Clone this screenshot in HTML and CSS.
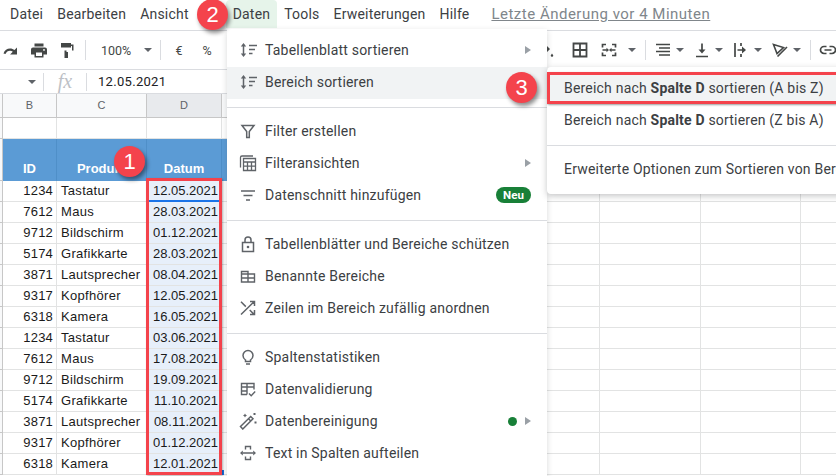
FILE: index.html
```html
<!DOCTYPE html>
<html lang="de">
<head>
<meta charset="utf-8">
<title>Daten-Menü</title>
<link rel="stylesheet" href="styles.css">
</head>
<body>
<div class="app">
  <header class="menubar">
    <span class="mi m-datei">Datei</span>
    <span class="mi">Bearbeiten</span>
    <span class="mi">Ansicht</span>
    <span class="mi mi-active">Daten</span>
    <span class="mi">Tools</span>
    <span class="mi">Erweiterungen</span>
    <span class="mi">Hilfe</span>
    <span class="lastedit">Letzte Änderung vor 4 Minuten</span>
  </header>

  <div class="toolbar">
    <span class="tb"><svg class="ic" viewBox="0 0 18 18"><path d="M1.500 12.500c1-3.200 3.600-5 6.600-5 1.700 0 3.200.6 4.400 1.600L15 6.600v6.900h-6.900l2.700-2.700c-.8-.7-1.700-1.100-2.800-1.100-1.900 0-3.800 1.200-4.500 3.300z" fill="#444746"/></svg></span>
    <span class="tb"><svg class="ic" viewBox="0 0 18 18"><path d="M4.500 2.500h9v3h-9zM3 6.500h12a2 2 0 0 1 2 2v5h-3.500v3h-9v-3H1v-5a2 2 0 0 1 2-2zm3 5v3.500h6v-3.500zm8-3.500a.9.900 0 1 0 0 1.800.9.900 0 0 0 0-1.800z" fill="#444746" fill-rule="evenodd"/></svg></span>
    <span class="tb"><svg class="ic" viewBox="0 0 18 18"><path d="M3 2h10v1.500h2.500v6H8.500V11H10v6H6.500v-7.500h7.500V5H13v1.500H3z" fill="#444746"/></svg></span>
    <span class="sep"></span>
    <span class="zoomval">100%</span>
    <span class="caret caret-zoom"></span>
    <span class="sep sep-b"></span>
    <span class="tbt">€</span>
    <span class="tbt">%</span>
    <span class="tb-space"></span>
    <span class="tb tb-fill"><svg class="ic" viewBox="0 0 18 18"><path d="M3 8l5-5 5 5-5 5zM15 12.500l1.300 2a1.300 1.300 0 1 1-2.600 0z" fill="#444746"/></svg></span>
    <span class="tb"><svg class="ic" viewBox="0 0 18 18"><path d="M2.500 2.500h13v13h-13zM9 2.500v13M2.500 9h13" fill="none" stroke="#444746" stroke-width="1.800"/></svg></span>
    <span class="tb tb-merge"><svg class="ic" viewBox="0 0 18 18"><path d="M6 3.500H2.500v3M2.500 11.500v3H6M12 3.500h3.500v3M15.500 11.500v3H12M2.500 9h4.500M15.500 9H11" fill="none" stroke="#444746" stroke-width="1.700"/><path d="M6.500 6.800L9 9l-2.500 2.200zM11.500 6.800L9 9l2.500 2.200z" fill="#444746"/></svg></span>
    <span class="tbc tbc-wide"><span class="caret"></span></span>
    <span class="sep sep-c"></span>
    <span class="tbg">
      <span class="tbi"><svg class="ic" viewBox="0 0 18 18"><path d="M2 3.500h14M5 7h11M2 10.500h14M5 14h11" fill="none" stroke="#444746" stroke-width="1.600"/></svg></span>
      <span class="tbc"><span class="caret"></span></span>
    </span>
    <span class="tbg">
      <span class="tbi"><svg class="ic" viewBox="0 0 18 18"><path d="M9 2.500v8M3 15.500h12" fill="none" stroke="#444746" stroke-width="1.700"/><path d="M5.500 8.500h7L9 12.500z" fill="#444746"/></svg></span>
      <span class="tbc"><span class="caret"></span></span>
    </span>
    <span class="tbg">
      <span class="tbi"><svg class="ic" viewBox="0 0 18 18"><path d="M3 2v14M9 2v3M9 13v3M5.500 9h6" fill="none" stroke="#444746" stroke-width="1.700"/><path d="M10 5.500L14 9l-4 3.500z" fill="#444746"/></svg></span>
      <span class="tbc"><span class="caret"></span></span>
    </span>
    <span class="tbg">
      <span class="tbi"><svg class="ic" viewBox="0 0 18 18"><path d="M2.500 3.500l10 3-6.500 6zM6.500 15.500l9.500-9.500" fill="none" stroke="#444746" stroke-width="1.600"/></svg></span>
      <span class="tbc"><span class="caret"></span></span>
    </span>
    <span class="sep sep-d"></span>
    <span class="tbi tb-link"><svg class="ic" viewBox="0 0 18 18"><path d="M7.500 5.500h-2.500a3.500 3.500 0 0 0 0 7h2.500M10.500 5.500h2.500a3.500 3.500 0 0 1 0 7h-2.500M5.500 9h7" fill="none" stroke="#444746" stroke-width="1.700"/></svg></span>
  </div>

  <div class="formulabar">
    <span class="caret caret-name"></span>
    <span class="fsep"></span>
    <span class="fx">fx</span>
    <span class="fsep"></span>
    <span class="fval">12.05.2021</span>
  </div>

  <div class="sheet">
    <div class="row colhead">
      <div class="c c0"></div><div class="c">B</div><div class="c">C</div><div class="c c-sel">D</div>
      <div class="c"></div><div class="c"></div><div class="c"></div><div class="c"></div><div class="c"></div><div class="c"></div><div class="c"></div>
    </div>
    <div class="row blank">
      <div class="c c0"></div><div class="c"></div><div class="c"></div><div class="c"></div>
      <div class="c"></div><div class="c"></div><div class="c"></div><div class="c"></div><div class="c"></div><div class="c"></div><div class="c"></div>
    </div>
    <div class="row thead">
      <div class="c c0"></div><div class="c">ID</div><div class="c">Produkt</div><div class="c">Datum</div>
      <div class="c"></div><div class="c"></div><div class="c"></div><div class="c"></div><div class="c"></div><div class="c"></div><div class="c"></div>
    </div>
    <div class="row data"><div class="c c0"></div><div class="c n">1234</div><div class="c t">Tastatur</div><div class="c d active">12.05.2021</div><div class="c"></div><div class="c"></div><div class="c"></div><div class="c"></div><div class="c"></div><div class="c"></div><div class="c"></div></div>
    <div class="row data"><div class="c c0"></div><div class="c n">7612</div><div class="c t">Maus</div><div class="c d">28.03.2021</div><div class="c"></div><div class="c"></div><div class="c"></div><div class="c"></div><div class="c"></div><div class="c"></div><div class="c"></div></div>
    <div class="row data"><div class="c c0"></div><div class="c n">9712</div><div class="c t">Bildschirm</div><div class="c d">01.12.2021</div><div class="c"></div><div class="c"></div><div class="c"></div><div class="c"></div><div class="c"></div><div class="c"></div><div class="c"></div></div>
    <div class="row data"><div class="c c0"></div><div class="c n">5174</div><div class="c t">Grafikkarte</div><div class="c d">28.03.2021</div><div class="c"></div><div class="c"></div><div class="c"></div><div class="c"></div><div class="c"></div><div class="c"></div><div class="c"></div></div>
    <div class="row data"><div class="c c0"></div><div class="c n">3871</div><div class="c t">Lautsprecher</div><div class="c d">08.04.2021</div><div class="c"></div><div class="c"></div><div class="c"></div><div class="c"></div><div class="c"></div><div class="c"></div><div class="c"></div></div>
    <div class="row data"><div class="c c0"></div><div class="c n">9317</div><div class="c t">Kopfhörer</div><div class="c d">12.05.2021</div><div class="c"></div><div class="c"></div><div class="c"></div><div class="c"></div><div class="c"></div><div class="c"></div><div class="c"></div></div>
    <div class="row data"><div class="c c0"></div><div class="c n">6318</div><div class="c t">Kamera</div><div class="c d">16.05.2021</div><div class="c"></div><div class="c"></div><div class="c"></div><div class="c"></div><div class="c"></div><div class="c"></div><div class="c"></div></div>
    <div class="row data"><div class="c c0"></div><div class="c n">1234</div><div class="c t">Tastatur</div><div class="c d">03.06.2021</div><div class="c"></div><div class="c"></div><div class="c"></div><div class="c"></div><div class="c"></div><div class="c"></div><div class="c"></div></div>
    <div class="row data"><div class="c c0"></div><div class="c n">7612</div><div class="c t">Maus</div><div class="c d">17.08.2021</div><div class="c"></div><div class="c"></div><div class="c"></div><div class="c"></div><div class="c"></div><div class="c"></div><div class="c"></div></div>
    <div class="row data"><div class="c c0"></div><div class="c n">9712</div><div class="c t">Bildschirm</div><div class="c d">19.09.2021</div><div class="c"></div><div class="c"></div><div class="c"></div><div class="c"></div><div class="c"></div><div class="c"></div><div class="c"></div></div>
    <div class="row data"><div class="c c0"></div><div class="c n">5174</div><div class="c t">Grafikkarte</div><div class="c d">11.10.2021</div><div class="c"></div><div class="c"></div><div class="c"></div><div class="c"></div><div class="c"></div><div class="c"></div><div class="c"></div></div>
    <div class="row data"><div class="c c0"></div><div class="c n">3871</div><div class="c t">Lautsprecher</div><div class="c d">08.11.2021</div><div class="c"></div><div class="c"></div><div class="c"></div><div class="c"></div><div class="c"></div><div class="c"></div><div class="c"></div></div>
    <div class="row data"><div class="c c0"></div><div class="c n">9317</div><div class="c t">Kopfhörer</div><div class="c d">01.12.2021</div><div class="c"></div><div class="c"></div><div class="c"></div><div class="c"></div><div class="c"></div><div class="c"></div><div class="c"></div></div>
    <div class="row data"><div class="c c0"></div><div class="c n">6318</div><div class="c t">Kamera</div><div class="c d">12.01.2021</div><div class="c"></div><div class="c"></div><div class="c"></div><div class="c"></div><div class="c"></div><div class="c"></div><div class="c"></div></div>
  </div>

  <span class="fillhandle"></span>
  <span class="redbox redbox-col"></span>

  <nav class="menu">
    <div class="item"><svg class="mic" viewBox="0 0 18 18"><path d="M4.500 5v8" stroke="#5f6368" stroke-width="1.500" fill="none"/><path d="M1.800 5.500L4.500 2l2.700 3.500zM1.800 12.500L4.500 16l2.700-3.500z" fill="#5f6368"/><path d="M10 4.500h8M10 8.500h6M10 12.500h3.500" stroke="#5f6368" stroke-width="1.500" fill="none"/></svg><span class="lbl">Tabellenblatt sortieren</span><span class="arrow"></span></div>
    <div class="item hl"><svg class="mic" viewBox="0 0 18 18"><path d="M4.500 5v8" stroke="#5f6368" stroke-width="1.500" fill="none"/><path d="M1.800 5.500L4.500 2l2.700 3.500zM1.800 12.500L4.500 16l2.700-3.500z" fill="#5f6368"/><path d="M10 4.500h8M10 8.500h6M10 12.500h3.500" stroke="#5f6368" stroke-width="1.500" fill="none"/></svg><span class="lbl">Bereich sortieren</span></div>
    <div class="div"></div>
    <div class="item"><svg class="mic" viewBox="0 0 18 18"><path d="M3 3.500h12L10.300 9.500v6H7.700v-6z" fill="none" stroke="#5f6368" stroke-width="1.500"/></svg><span class="lbl">Filter erstellen</span></div>
    <div class="item"><svg class="mic" viewBox="0 0 18 18"><path d="M1.500 13.500V3.500a1.500 1.500 0 0 1 1.500-1.500h11M4.500 4.500h12v12h-12zM4.500 8h12M8.500 8v8.500M12.500 8v8.500M4.500 12.200h12" fill="none" stroke="#5f6368" stroke-width="1.300"/></svg><span class="lbl">Filteransichten</span><span class="arrow"></span></div>
    <div class="item"><svg class="mic" viewBox="0 0 18 18"><path d="M2 5h14M4.500 9.500h9M7 14h4" fill="none" stroke="#5f6368" stroke-width="1.500"/></svg><span class="lbl">Datenschnitt hinzufügen</span><span class="neu">Neu</span></div>
    <div class="div"></div>
    <div class="item"><svg class="mic" viewBox="0 0 18 18"><path d="M3.500 7.500h11v9h-11zM6 7.500V5a3 3 0 0 1 6 0v2.500" fill="none" stroke="#5f6368" stroke-width="1.500"/><circle cx="9" cy="12" r="1.300" fill="#5f6368"/></svg><span class="lbl">Tabellenblätter und Bereiche schützen</span></div>
    <div class="item"><svg class="mic" viewBox="0 0 18 18"><path d="M2.500 4.500h6.500v2.500h6.500v8h-13zM2.500 7h6.500v8M2.500 11h13" fill="none" stroke="#5f6368" stroke-width="1.400"/></svg><span class="lbl">Benannte Bereiche</span></div>
    <div class="item"><svg class="mic" viewBox="0 0 18 18"><path d="M2 15.500L15 2.800M2 2.800l4.800 4.800M10.700 11l4.400 4.400M11 2.500h4.500V7M15.500 11v4.500H11" fill="none" stroke="#5f6368" stroke-width="1.500"/></svg><span class="lbl">Zeilen im Bereich zufällig anordnen</span></div>
    <div class="div"></div>
    <div class="item"><svg class="mic" viewBox="0 0 18 18"><path d="M6.500 12c-1.500-1-2.500-2.600-2.500-4.500a5 5 0 0 1 10 0c0 1.900-1 3.500-2.500 4.500v1.500h-5zM7 16h4" fill="none" stroke="#5f6368" stroke-width="1.500"/></svg><span class="lbl">Spaltenstatistiken</span></div>
    <div class="item"><svg class="mic" viewBox="0 0 18 18"><path d="M8 14.500H2.500v-11h12.500v6M2.500 7h12.500M2.500 11h6M8 3.500V14.500" fill="none" stroke="#5f6368" stroke-width="1.400"/><path d="M10 13.500l2.200 2.200 4-4.200" fill="none" stroke="#5f6368" stroke-width="1.400"/></svg><span class="lbl">Datenvalidierung</span></div>
    <div class="item"><svg class="mic" viewBox="0 0 18 18"><path d="M1.500 14.500L11.700 4.500l2.300 2.300L3.800 17zM9.500 6.700l2.300 2.300" fill="none" stroke="#5f6368" stroke-width="1.500"/><path d="M6 1.500l.7 1.300L8 3.500l-1.300.7L6 5.500l-.7-1.300L4 3.500l1.300-.7zM14.500 1h2v2h-2zM15.500 9.500h2v2h-2z" fill="#5f6368"/></svg><span class="lbl">Datenbereinigung</span><span class="dot"></span><span class="arrow arrow-dot"></span></div>
    <div class="item"><svg class="mic" viewBox="0 0 18 18"><path d="M6.500 5.500V2.500h5v3M6.500 12.500v3h5v-3M3.500 9h11" fill="none" stroke="#5f6368" stroke-width="1.400"/><path d="M3.800 6.500L1 9l2.800 2.500zM14.200 6.500L17 9l-2.800 2.500z" fill="#5f6368"/></svg><span class="lbl">Text in Spalten aufteilen</span></div>
  </nav>

  <nav class="submenu">
    <div class="subitem hl"><span class="lbl">Bereich nach <b>Spalte D</b> sortieren (A bis Z)</span></div>
    <div class="subitem"><span class="lbl">Bereich nach <b>Spalte D</b> sortieren (Z bis A)</span></div>
    <div class="div"></div>
    <div class="subitem"><span class="lbl">Erweiterte Optionen zum Sortieren von Bereichen</span></div>
  </nav>
  <span class="redbox redbox-sub"></span>

  <span class="badge b1">1</span>
  <span class="badge b2">2</span>
  <span class="badge b3">3</span>
</div>
</body>
</html>
```

FILE: styles.css
```css
* { box-sizing: border-box; }
html, body { margin: 0; padding: 0; }
body { width: 836px; height: 476px; overflow: hidden; background: #fff; font-family: Roboto, "Liberation Sans", sans-serif; }
.app { position: relative; width: 836px; height: 476px; overflow: hidden; }

.menubar { height: 31px; display: flex; align-items: center; padding: 0 0 2px 3px; border-bottom: 1px solid #dadce0; font-size: 14px; letter-spacing: .2px; color: #3c4043; }
.mi { padding: 0 7px; height: 28px; line-height: 28px; border-radius: 4px 4px 0 0; }
.mi-active { background: #e6f4ea; margin-left: 30px; }
.lastedit { margin-left: 15px; color: #80868b; text-decoration: underline; font-size: 15px; letter-spacing: .5px; }

.toolbar { height: 39px; display: flex; align-items: center; margin-left: -3px; width: 860px; border-bottom: 1px solid #dadce0; }
.tb { width: 28px; height: 28px; display: flex; align-items: center; justify-content: center; flex: none; }
.ic { width: 18px; height: 18px; display: block; }
.sep { width: 1px; height: 20px; background: #dadce0; margin-left: 4px; flex: none; }
.zoomval { margin-left: 15px; width: 32px; font-size: 12.5px; color: #444746; flex: none; }
.caret { display: block; width: 0; height: 0; border-left: 4px solid transparent; border-right: 4px solid transparent; border-top: 4px solid #5f6368; flex: none; }
.caret-zoom { margin-left: 11px; }
.sep-b { margin-left: 8px; }
.tbt { width: 28px; text-align: center; font-size: 12.5px; color: #444746; flex: none; }
.sep-b + .tbt { margin-left: 4px; }
.tb-space { width: 311px; flex: none; }
.tb-fill { margin-right: 6px; }
.tb-merge { margin-left: 1px; }
.tbc { width: 10px; display: flex; justify-content: center; flex: none; }
.tbc-wide { width: 18px; }
.sep-c { margin-left: 4px; margin-right: 5px; }
.tbg { display: flex; align-items: center; margin-right: 5px; flex: none; }
.tbi { width: 24px; height: 28px; display: flex; align-items: center; justify-content: center; flex: none; }
.sep-d { margin-left: 3px; }
.tb-link { margin-left: 5px; }

.formulabar { height: 24px; display: flex; align-items: center; padding-left: 28px; border-bottom: 1px solid #dadce0; }
.caret-name { margin-right: 7px; }
.fsep { width: 1px; height: 18px; background: #dadce0; flex: none; }
.fx { width: 42px; text-align: center; font-family: "Liberation Serif", serif; font-style: italic; font-size: 20px; color: #bdc1c6; }
.fval { margin-left: 11px; font-size: 13px; letter-spacing: .3px; color: #202124; }

.sheet { font-family: "Liberation Sans", Arial, sans-serif; font-size: 13px; color: #1a1a1a; }
.row { display: grid; grid-template-columns: 3px 54px 90px 75px 76.5px repeat(6, 100.5px); }
.c { border-right: 1px solid #e2e3e3; border-bottom: 1px solid #e2e3e3; white-space: nowrap; overflow: hidden; }
.colhead { height: 24px; }
.colhead .c { background: #f8f9fa; border-color: #c7c7c7; text-align: center; font-size: 11px; line-height: 23px; color: #5f6368; }
.colhead .c-sel { background: #e8eaed; }
.blank { height: 21px; }
.thead { height: 42px; }
.thead .c { background: #5b9bd5; border-color: #5b9bd5; border-right-color: #4f8fc8; color: #fff; font-weight: bold; text-align: center; line-height: 59px; }
.thead .c0 { background: #f8f9fa; border-color: #c7c7c7; }
.data { height: 21px; line-height: 20px; }
.n { text-align: right; padding-right: 3px; letter-spacing: .2px; }
.t { padding-left: 4px; letter-spacing: .3px; }
.d { text-align: right; padding-right: 3px; background: #e7effa; }
.active { border-bottom: 2px solid #1a73e8; }
.c0 { background: #f8f9fa; border-color: #c7c7c7; }

.fillhandle { position: absolute; left: 219px; top: 470px; width: 5px; height: 5px; background: #1a73e8; }
.redbox { position: absolute; border: 3px solid #f4434c; }
.redbox-col { left: 146px; top: 178px; width: 76px; height: 297px; box-shadow: 1px 1px 2px rgba(0,0,0,.3); }
.redbox-sub { left: 547px; top: 72px; width: 295px; height: 32px; box-shadow: 1px 1px 2px rgba(0,0,0,.35); }

.menu { position: absolute; left: 227px; top: 29px; width: 320px; height: 450px; padding-top: 6px; background: #fff; box-shadow: 0 2px 6px rgba(60,64,67,.2); font-size: 14px; letter-spacing: .2px; color: #3c4043; }
.item { position: relative; height: 32px; display: flex; align-items: center; padding: 0 16px 2px 12px; }
.mic { width: 18px; height: 18px; flex: none; margin-right: 8px; }
.hl { background: #f1f3f4; }
.div { height: 1px; background: #dadce0; margin: 8px 0; }
.lbl { white-space: nowrap; }
.arrow { margin-left: auto; width: 0; height: 0; border-top: 4px solid transparent; border-bottom: 4px solid transparent; border-left: 6px solid #9aa0a6; }
.arrow-dot { margin-left: 8px; }
.neu { margin-left: auto; width: 35px; height: 16px; line-height: 16px; border-radius: 8px; background: #188038; color: #fff; font-size: 11.5px; font-weight: 700; text-align: center; letter-spacing: 0; }
.dot { margin-left: auto; width: 9px; height: 9px; border-radius: 50%; background: #188038; }

.submenu { position: absolute; left: 547px; top: 67px; width: 320px; height: 127px; padding-top: 6px; background: #fff; border-radius: 4px 0 0 4px; box-shadow: 0 2px 6px rgba(60,64,67,.3); font-size: 14px; letter-spacing: .2px; color: #3c4043; }
.subitem { height: 32px; display: flex; align-items: center; padding: 0 0 2px 17px; }
.subitem b { font-weight: 700; }

.badge { position: absolute; width: 31px; height: 31px; border-radius: 50%; background: #f4434c; color: #fff; font-family: "Liberation Sans", Arial, sans-serif; font-size: 22px; line-height: 31px; text-align: center; box-shadow: 2px 3px 4px rgba(0,0,0,.45); }
.b1 { left: 114px; top: 146px; }
.b2 { left: 197px; top: -1px; }
.b3 { left: 506px; top: 72px; }
```
